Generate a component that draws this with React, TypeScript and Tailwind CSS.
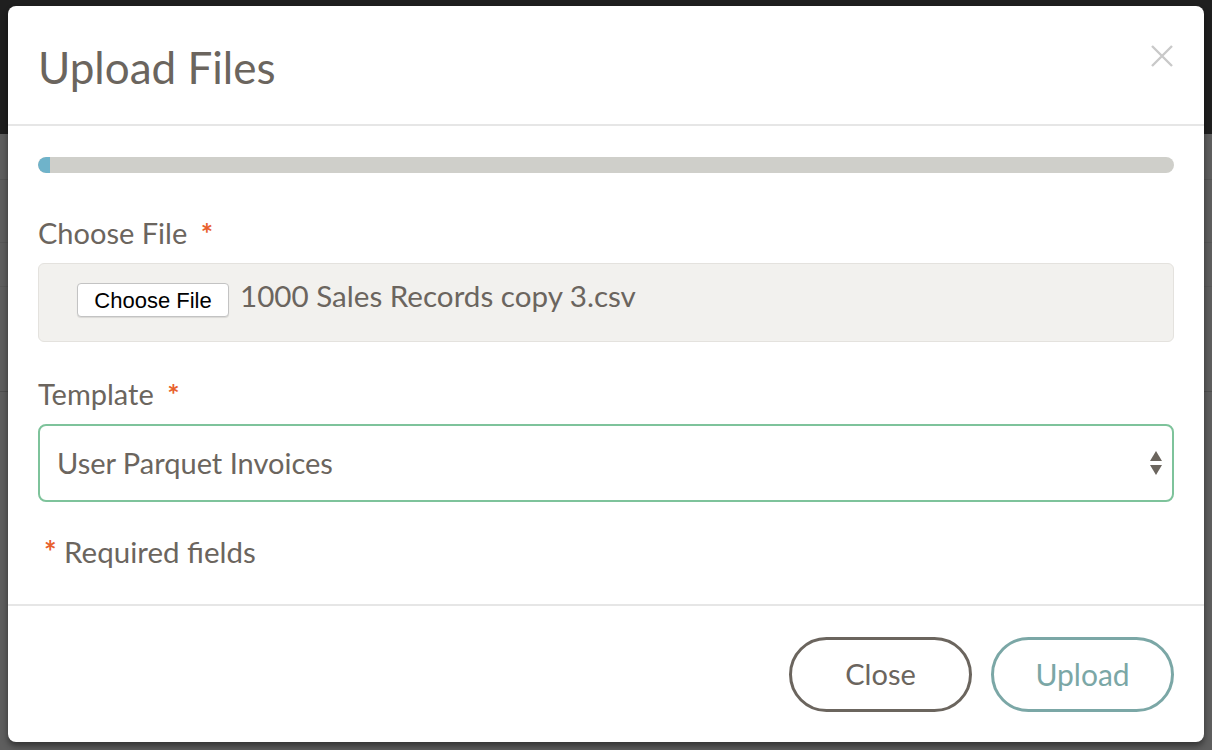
import React from 'react';

const UploadModal: React.FC = () => {
  return (
    <div className="relative w-[1212px] h-[750px] overflow-hidden bg-[#5e5e5e] font-['Lato','Liberation_Sans',sans-serif]">
      {/* page behind the overlay */}
      <div className="h-[134px] bg-[#1f1f1f]" />
      <div className="h-[46px] border-b border-[#555]" />
      <div className="h-[63px] border-b border-[#575757]" />
      <div className="h-[44px] border-b border-[#585858]" />
      <div className="h-[105px] border-b border-[#4f4f4f]" />

      {/* modal */}
      <div className="absolute left-[8px] top-[6px] w-[1196px] h-[736px] bg-white rounded-[8px] shadow-[0_4px_6px_rgba(0,0,0,0.45)] flex flex-col text-[#6b655e]">
        <div className="h-[120px] flex items-start justify-between pl-[30px] pr-[30px] pt-[35px] border-b-2 border-[#e6e6e6]">
          <h1 className="text-[44px] leading-[52px]">Upload Files</h1>
          <button className="mt-[3px] text-[#c9c9c9]">
            <svg width="24" height="24" viewBox="0 0 24 24" fill="none" stroke="currentColor" strokeWidth="2.4">
              <path d="M2 2L22 22M22 2L2 22" />
            </svg>
          </button>
        </div>

        <div className="px-[30px] pt-[31px] flex-1">
          <div className="h-[16px] rounded-full bg-[#cfcfca] overflow-hidden">
            <div className="h-full w-[12px] rounded-l-full bg-[#6fb3ca]" />
          </div>

          <div className="mt-[44px] text-[29px] leading-[32px]">
            Choose File <span className="text-[#e8602c] font-bold ml-[6px]">*</span>
          </div>
          <div className="mt-[14px] h-[79px] rounded-[6px] bg-[#f2f1ee] border border-[#e4e2de] flex items-start pl-[38px] pt-[19px]">
            <button className="h-[34px] w-[152px] bg-white border border-[#c3c3c3] rounded-[4px] text-[22px] text-black font-['Liberation_Sans',sans-serif] shadow-[0_1px_1px_rgba(0,0,0,0.1)]">
              Choose File
            </button>
            <span className="ml-[11px] text-[29.6px] leading-[28px] -mt-[1px]">1000 Sales Records copy 3.csv</span>
          </div>

          <div className="mt-[36px] text-[29px] leading-[32px]">
            Template <span className="text-[#e8602c] font-bold ml-[6px]">*</span>
          </div>
          <div className="mt-[14px] h-[78px] rounded-[8px] border-2 border-[#7ec39b] flex items-center justify-between pl-[17px] pr-[8px]">
            <span className="text-[29px]">User Parquet Invoices</span>
            <svg width="16" height="26" viewBox="0 0 16 26" className="text-[#6b655e]">
              <path d="M8 1L14 11H2Z" fill="currentColor" />
              <path d="M8 25L14 15H2Z" fill="currentColor" />
            </svg>
          </div>

          <div className="mt-[34px] pl-[6px] text-[29.5px] leading-[32px]">
            <span className="text-[#e8602c] font-bold">*</span> Required fields
          </div>
        </div>

        <div className="h-[138px] border-t-2 border-[#e6e6e6] flex items-center justify-end gap-[19px] pr-[30px]">
          <button className="w-[183px] h-[75px] rounded-full border-[3px] border-[#6b655e] text-[29px] text-[#6b655e]">
            Close
          </button>
          <button className="w-[183px] h-[75px] rounded-full border-[3px] border-[#7ba7a6] text-[30px] text-[#7ba7a6]">
            Upload
          </button>
        </div>
      </div>
    </div>
  );
};

export default function App() {
  return <UploadModal />;
}
